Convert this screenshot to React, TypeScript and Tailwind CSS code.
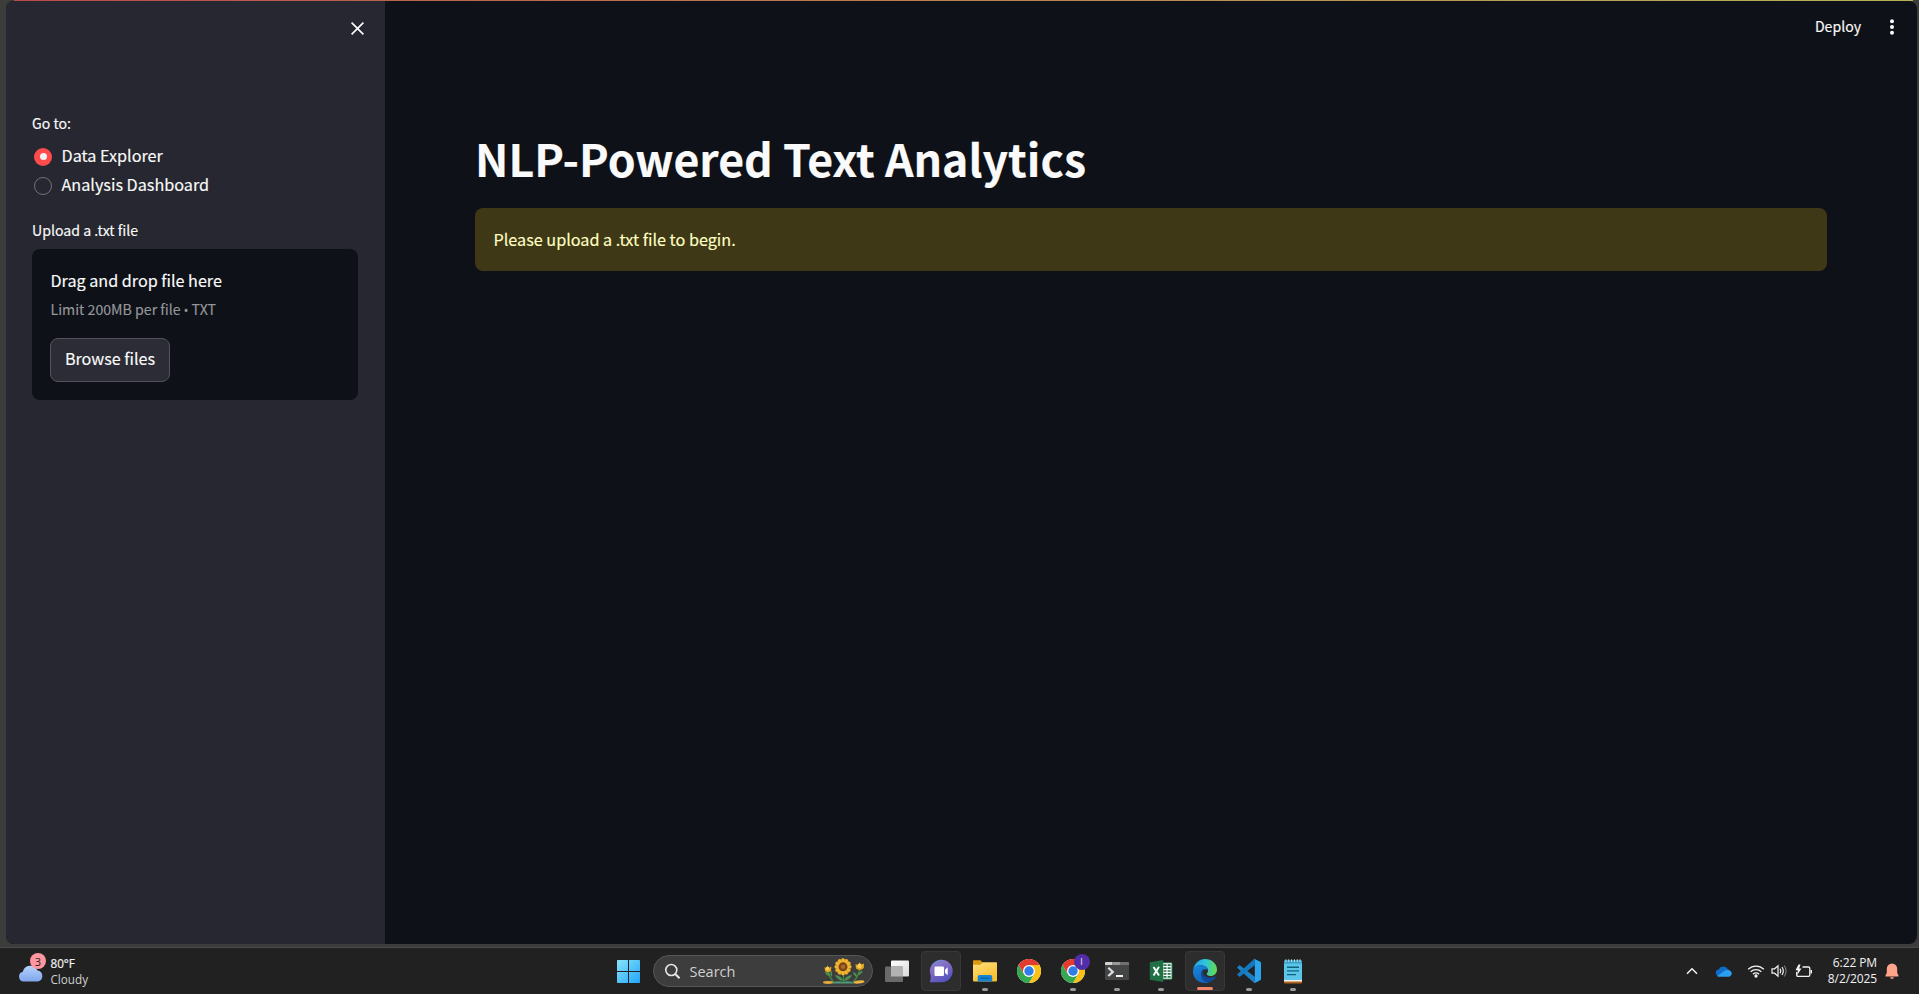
import React from "react";

const Chrome = () => (
  <svg width="24" height="24" viewBox="0 0 48 48">
    <circle cx="24" cy="24" r="24" fill="#fff" />
    <path d="M24 12 H44.8 A24 24 0 0 1 24 48 L34.4 30 Z" fill="#fbc116" />
    <path d="M13.6 30 L3.2 12 A24 24 0 0 0 24 48 L34.4 30 Z" fill="#34a853" />
    <path d="M3.2 12 L13.6 30 L24 24 L24 12 H44.8 A24 24 0 0 0 3.2 12Z" fill="#e33b2e" />
    <circle cx="24" cy="24" r="12" fill="#fff" />
    <circle cx="24" cy="24" r="9.4" fill="#2f7de9" />
  </svg>
);

const Windows = () => (
  <svg width="23" height="23" viewBox="0 0 23 23">
    <defs>
      <linearGradient id="win" x1="0" y1="0" x2="1" y2="1" gradientUnits="objectBoundingBox">
        <stop offset="0" stopColor="#8be3fb" />
        <stop offset="1" stopColor="#1fa6f7" />
      </linearGradient>
    </defs>
    <path d="M0 .7Q0 0 .7 0H11V11H0ZM12 0H22.3Q23 0 23 .7V11H12ZM0 12H11V23H.7Q0 23 0 22.3ZM12 12H23V22.3Q23 23 22.3 23H12Z" fill="url(#win)" />
  </svg>
);

const Petals = ({ cx, cy, r }: { cx: number; cy: number; r: number }) => (
  <g>
    {[15, 45, 75, 105, 135, 165, 195, 225, 255, 285, 315, 345].map((a) => (
      <ellipse key={a} cx={cx} cy={cy - r * 0.62} rx={r * 0.19} ry={r * 0.34} fill="#d08a14" transform={`rotate(${a} ${cx} ${cy})`} />
    ))}
    {[0, 30, 60, 90, 120, 150, 180, 210, 240, 270, 300, 330].map((a) => (
      <ellipse key={a} cx={cx} cy={cy - r * 0.68} rx={r * 0.18} ry={r * 0.34} fill="#f0b634" transform={`rotate(${a} ${cx} ${cy})`} />
    ))}
    <circle cx={cx} cy={cy} r={r * 0.52} fill="#7a4414" />
    <circle cx={cx} cy={cy} r={r * 0.27} fill="#a9682c" />
  </g>
);

const Sunflowers = () => (
  <svg width="42" height="26" viewBox="0 0 42 26">
    <path d="M20.500 14V25M5 13Q7 21 11 24M37 11Q35 19 30 24" stroke="#3f8a3e" strokeWidth="1.300" fill="none" />
    <path d="M20 23Q14 22 12 17Q19 18 20 23ZM21 23Q27 22 29 17Q22 18 21 23ZM7 18Q3 18 2 14Q7 14 7 18ZM35 17Q38 17 40 13Q36 13 35 17ZM9 19Q10 15 8 12Q6 16 9 19ZM34 19Q30 17 30 14Q34 15 34 19Z" fill="#4c9152" />
    <path d="M8 25.500Q13 22 20 24Q27 22 32 25.500Z" fill="#4f9a78" />
    <ellipse cx="5" cy="24.500" rx="5" ry="1.400" fill="#e7a83a" />
    <ellipse cx="36" cy="24" rx="5.500" ry="1.500" fill="#efb441" transform="rotate(-6 36 24)" />
    <path d="M1.500 9L3 10L4.500 7.500L6 9.800L8.300 8.500L8 13Q5 15.500 2 13Z" fill="#e6a520" />
    <circle cx="4.500" cy="10.500" r="1.800" fill="#f8cf55" />
    <path d="M32.500 6L34.500 7L36.500 4.500L38.500 6.500L41 5.500L40.800 10Q37 13.500 33 10.500Z" fill="#e6a520" />
    <circle cx="36.500" cy="8" r="2.200" fill="#f8cf55" />
    <Petals cx={20} cy={8.800} r={8.600} />
  </svg>
);

const TaskView = () => (
  <svg width="24" height="23" viewBox="0 0 24 23">
    <defs>
      <linearGradient id="tv" x1="0" y1="0" x2="1" y2="1">
        <stop offset="0" stopColor="#ffffff" />
        <stop offset="1" stopColor="#d9d9d9" />
      </linearGradient>
    </defs>
    <rect x="6" y="0.500" width="18" height="16" rx="1" fill="url(#tv)" />
    <rect x="0" y="6.500" width="18" height="15.500" rx="1" fill="#6a6a6a" />
    <path d="M6 6.500H18V16.500H6Z" fill="#b2b2b2" />
  </svg>
);

const Meet = () => (
  <svg width="24" height="24" viewBox="0 0 24 24">
    <defs>
      <linearGradient id="mt" x1="0.200" y1="0" x2="0.700" y2="1">
        <stop offset="0" stopColor="#6b8fd6" />
        <stop offset="0.300" stopColor="#8a6fc4" />
        <stop offset="1" stopColor="#5052bd" />
      </linearGradient>
    </defs>
    <path d="M12.500 .8A11.200 11.200 0 1 1 12.500 23.200H1.200Q.6 22.800 1.300 21.500Q1.800 20 1.600 16A11.200 11.200 0 0 1 12.500 .8Z" fill="url(#mt)" />
    <rect x="5.500" y="7.500" width="9.500" height="9.500" rx="1.200" fill="#fff" />
    <path d="M16 10.700L18.700 8.200V16.300L16 13.800Z" fill="#fff" />
  </svg>
);

const Folder = () => (
  <svg width="24" height="22" viewBox="0 0 24 22">
    <defs>
      <linearGradient id="fd" x1="0" y1="0" x2="0.500" y2="1">
        <stop offset="0" stopColor="#ffdf7d" />
        <stop offset="1" stopColor="#f9bf2d" />
      </linearGradient>
    </defs>
    <path d="M0 1Q0 .3 .8 .3H7.500L9.600 2.500V6H0Z" fill="#d99a10" />
    <path d="M0 4.800H7.300L9.800 2.200H23.200Q24 2.200 24 3V20.500Q24 21.500 23 21.500H1Q0 21.500 0 20.500Z" fill="url(#fd)" />
    <path d="M4.700 21.500V16.800Q4.700 15 6.500 15H17.400Q19.200 15 19.200 16.800V21.500Z" fill="#1583d3" />
    <path d="M7.500 18.200H16.400" stroke="#0b5aa0" strokeWidth="1.100" />
  </svg>
);

const TerminalIcon = () => (
  <svg width="24" height="18" viewBox="0 0 24 18">
    <rect width="24" height="18" rx="1" fill="#444547" />
    <path d="M0 3V1Q0 0 1 0H7.500V3Z" fill="#d0d0d0" />
    <path d="M7.500 0H15.500V3H7.500Z" fill="#999" />
    <path d="M15.500 0H23Q24 0 24 1V3H15.500Z" fill="#717171" />
    <path d="M3.300 5.800L7.800 9.900L3.300 14" stroke="#dedede" strokeWidth="2.200" fill="none" />
    <path d="M11 14H18" stroke="#fff" strokeWidth="1.900" />
  </svg>
);

const Excel = () => (
  <svg width="24" height="22" viewBox="0 0 24 22">
    <rect x="12" y="2.700" width="11" height="16.500" rx=".6" fill="#fff" stroke="#207245" strokeWidth="1" />
    <path d="M14.500 5.200H17.500M14.500 8.100H17.500M14.500 11H17.500M14.500 13.900H17.500M14.500 16.800H17.500M18.600 5.200H21.600M18.600 8.100H21.600M18.600 11H21.600M18.600 13.900H21.600M18.600 16.800H21.600" stroke="#207245" strokeWidth="1.700" />
    <path d="M.8 2.300L14.200 0V22L.8 19.800Z" fill="#1f7145" />
    <path d="M4.500 7L10 15.400M10 6.800L4.500 15.400" stroke="#fff" strokeWidth="1.900" />
  </svg>
);

const Edge = () => (
  <svg width="24" height="24" viewBox="0 0 24 24">
    <defs>
      <linearGradient id="e1" x1="0" y1="0.300" x2="1" y2="0.400">
        <stop offset="0" stopColor="#259fe4" />
        <stop offset="0.500" stopColor="#2fc3dd" />
        <stop offset="1" stopColor="#62dc4c" />
      </linearGradient>
      <linearGradient id="e2" x1="0" y1="0" x2="0.400" y2="1">
        <stop offset="0" stopColor="#1989dc" />
        <stop offset="1" stopColor="#1166bd" />
      </linearGradient>
    </defs>
    <path d="M.3 10.500C1.200 4.200 6.200 0 12 0C19 0 24 5 24 10.500C24 14.500 21 17 17.600 17C14.500 17 13.700 15.700 13.700 15C13.700 14.300 15.100 13.700 15.100 11.600C15.100 8.600 11.800 6.300 8 6.300C4.500 6.300 1.600 8 .3 10.500Z" fill="url(#e1)" />
    <path d="M0 12.200C.4 8.300 3.700 6.300 7.700 6.300C11.300 6.300 14.900 8.300 15.100 11.300C13.800 9.300 9 10 8.300 14C7.700 18.500 12 23 17.500 22.200C15.800 23.400 14 24 12 24C5 24 -.4 18.600 0 12.200Z" fill="url(#e2)" />
    <path d="M9.200 11.200C6.500 14.800 8 23 15.500 23.400C18.700 22.500 21.400 20.500 22.700 18.200C23 17.700 22.700 17.400 22.200 17.600C17 19.800 11.600 18.500 10.300 15.200C9.600 13.500 9.900 12 11 10.200Q10 10.400 9.200 11.200Z" fill="#10489a" />
  </svg>
);

const VSCode = () => (
  <svg width="24" height="24" viewBox="0 0 24 24">
    <path d="M.4 7.900L1.900 6.500Q2.500 6.100 3.100 6.500L17.800 17.800V23.600Q17 23.800 16.400 23.200L.4 8.900Q0 8.400 .4 7.900Z" fill="#1b80c4" />
    <path d="M.4 16.100L1.900 17.500Q2.500 17.900 3.100 17.500L17.800 6.200V.4Q17 .2 16.400 .8L.4 15.100Q0 15.600 .4 16.100Z" fill="#1478bd" />
    <path d="M16.300 23.300Q17 24.200 18.200 23.700L23.200 21.300Q24 20.900 24 20V4Q24 3.100 23.200 2.700L18.200 .3Q17 -.2 16.300 .7Q17.800 0 17.800 1.600V22.400Q17.800 24 16.300 23.300Z" fill="#2ba4ee" />
  </svg>
);

const Notepad = () => (
  <svg width="20" height="25" viewBox="0 0 20 25">
    <rect x="1" y="20" width="18" height="4.500" rx="1" fill="#b5651d" />
    <rect x="1" y="19" width="18" height="3.500" fill="#f2f2f2" />
    <path d="M1 2.500Q1 1.500 2 1.500H18Q19 1.500 19 2.500V21H1Z" fill="#5cc6e8" />
    <path d="M1 2.500Q1 1.500 2 1.500H18Q19 1.500 19 2.500V4.500H1Z" fill="#3a9ec4" />
    <path d="M3 .3V3M5.800 .3V3M8.600 .3V3M11.400 .3V3M14.200 .3V3M17 .3V3" stroke="#bfe9f7" strokeWidth="1" />
    <path d="M4 8.200H16M4 11.900H16M4 15.600H13" stroke="#10617f" strokeWidth="1.400" />
  </svg>
);

const Tile = ({ children, active, dot }: { children: React.ReactNode; active?: boolean; dot?: string }) => (
  <div className={"relative flex h-10 w-10 items-center justify-center rounded-[4px] " + (active ? "border border-[#383838] bg-[#2d2d2d]" : "")}>
    {children}
    {dot && <span className={"absolute bottom-0 left-1/2 h-[3px] -translate-x-1/2 rounded-full " + dot} />}
  </div>
);

const grayDot = "w-[6px] bg-[#9a9a9a]";

const Taskbar = () => (
  <footer className="flex h-[47px] shrink-0 items-center border-t border-[#4a4a4a] bg-[#212121] font-['Open_Sans',sans-serif] text-[#f2f2f2]">
    <div className="flex flex-1 items-center pl-[18px]">
      <div className="relative h-[30px] w-[32px]">
        <svg className="mt-[7px]" width="26" height="19" viewBox="0 0 26 19">
          <defs>
            <linearGradient id="cl" x1="0" y1="0" x2="0" y2="1">
              <stop offset="0" stopColor="#b5d2fb" />
              <stop offset="1" stopColor="#7fa6ec" />
            </linearGradient>
          </defs>
          <path d="M5.500 18.500A5 5 0 0 1 4.800 8.700A7.800 7.800 0 0 1 19.500 7.500A5.600 5.600 0 0 1 20 18.500Z" fill="url(#cl)" />
        </svg>
        <span className="absolute left-[12px] top-[-3px] flex h-4 w-4 items-center justify-center rounded-full bg-[#ff96a0] text-[11px] leading-none text-[#1c1c1c]">3</span>
      </div>
      <div className="pb-px pl-[0.500px] text-[11.700px] leading-4">
        <div className="[-webkit-text-stroke:0.2px]">80°F</div>
        <div className="text-[#cfcfcf]">Cloudy</div>
      </div>
    </div>
    <div className="ml-[4px] flex items-center gap-1">
      <Tile><Windows /></Tile>
      <div className="flex h-8 w-[220px] items-center rounded-full border border-[#565656] bg-[#3d3d3d] pl-[10px] pr-[7px]">
        <svg width="17" height="17" viewBox="0 0 17 17" fill="none" stroke="#e6e6e6">
          <circle cx="7.300" cy="7" r="5.500" strokeWidth="1.600" />
          <path d="M11.300 11L15.500 15.300" strokeWidth="2" />
        </svg>
        <span className="ml-[9px] flex-1 pt-px text-[14.500px] text-[#cfcfcf]">Search</span>
        <Sunflowers />
      </div>
      <Tile><TaskView /></Tile>
      <Tile active><Meet /></Tile>
      <Tile dot={grayDot}><Folder /></Tile>
      <Tile><Chrome /></Tile>
      <Tile dot={grayDot}>
        <Chrome />
        <span className="absolute right-[3px] top-[3px] flex h-4 w-4 items-center justify-center rounded-full bg-[#512da8] font-['Roboto',sans-serif] text-[9px] leading-none text-[#e6dff5]">I</span>
      </Tile>
      <Tile dot={grayDot}><TerminalIcon /></Tile>
      <Tile dot={grayDot}><Excel /></Tile>
      <Tile active dot="w-4 bg-[#f4856a]"><Edge /></Tile>
      <Tile dot={grayDot}><VSCode /></Tile>
      <Tile dot={grayDot}><Notepad /></Tile>
    </div>
    <div className="flex flex-1 items-center justify-end pr-[20px]">
      <svg width="12" height="8" viewBox="0 0 12 8" fill="none" stroke="#f2f2f2" strokeWidth="1.500">
        <path d="M1 6.800L6 1.800L11 6.800" />
      </svg>
      <svg className="ml-[17px]" width="17" height="11" viewBox="0 0 17 11">
        <path d="M3.500 10A3.300 3.300 0 0 1 3.600 3.500A5.300 5.300 0 0 1 13 3.300A3.800 3.800 0 0 1 13.500 10Z" fill="#0f6cc8" />
        <path d="M2.200 10L10 4.500Q13 3.500 15.500 5Q17.500 7 16.300 9Q15.500 10.800 13.500 10.800H3.500Q2.500 10.800 2.200 10Z" fill="#2aa0ee" />
      </svg>
      <svg className="ml-[15px]" width="18" height="14" viewBox="0 0 18 14" fill="none" stroke="#f2f2f2" strokeWidth="1.300">
        <path d="M1.200 5.300A11 11 0 0 1 16.800 5.300M3.700 7.800A7.500 7.500 0 0 1 14.300 7.800M6 10.200A4.200 4.200 0 0 1 12 10.200" />
        <circle cx="9" cy="12" r="1" fill="#f2f2f2" />
      </svg>
      <svg className="ml-[6px]" width="17" height="14" viewBox="0 0 17 14" fill="none" stroke="#f2f2f2" strokeWidth="1.200">
        <path d="M1 4.800H3.600L7 1.800V12.200L3.600 9.200H1Z" />
        <path d="M9 4.700Q10.500 7 9 9.300M11 3Q13.600 7 11 11" />
        <path d="M13.200 1.500Q17 7 13.200 12.500" stroke="#777" />
      </svg>
      <svg className="ml-[7px]" width="18" height="15" viewBox="0 0 18 15" fill="none" stroke="#f2f2f2" strokeWidth="1.300">
        <path d="M7.500 3H13.500Q14.800 3 14.800 4.300V11Q14.800 12.300 13.500 12.300H3Q1.700 12.300 1.700 11V8" />
        <path d="M15.500 6H17V9.500H15.500Z" fill="#f2f2f2" stroke="none" />
        <path d="M3.500 .5L.5 6.200H2.800L2.200 11L6.500 4.500H4.200L5.500 .5Z" fill="#f2f2f2" stroke="none" />
      </svg>
      <div className="ml-[13px] w-[51px] whitespace-nowrap text-right text-[12px] leading-4 tracking-[-0.1px]">
        <div>6:22 PM</div>
        <div>8/2/2025</div>
      </div>
      <svg className="ml-[8px]" width="14" height="17" viewBox="0 0 14 17" fill="#ffa38b">
        <path d="M7 .5A5.200 5.200 0 0 0 1.800 5.700V9.800L.4 12.800Q.2 13.500 .9 13.500H13.100Q13.800 13.500 13.600 12.800L12.200 9.800V5.700A5.200 5.200 0 0 0 7 .5ZM5 14.300H9Q8.500 16 7 16T5 14.300Z" />
      </svg>
    </div>
  </footer>
);

export default function App() {
  return (
    <div className="flex h-[994px] w-[1919px] flex-col overflow-hidden bg-[#3c3c3b] font-['Noto_Sans_CJK_SC',sans-serif] text-[#fafafa]">
      <div className="flex h-[947px] flex-col pb-[3px] pl-[6px] pr-[2px] [-webkit-text-stroke:0.15px]">
        <div className="ml-2 mr-1 h-px shrink-0 bg-linear-to-r from-[#b94a4a] to-[#b5b355]" />
        <div className="flex flex-1 overflow-hidden rounded-lg bg-[#0e1118]">
          <aside className="flex w-[379px] flex-col bg-[#262730] pl-[26px] pr-[27px]">
            <div className="mr-[-6px] flex justify-end pt-[21px]">
              <svg width="13" height="13" viewBox="0 0 13 13" stroke="#fafafa" strokeWidth="1.700">
                <path d="M.6 .6L12.400 12.400M12.400 .6L.6 12.400" />
              </svg>
            </div>
            <div className="mt-[77px] text-[14.100px] leading-[22px]">Go to:</div>
            <div className="mt-[8px] flex flex-col text-[16.200px]">
              <div className="flex h-[29px] items-center gap-[9.500px] pl-[2px]">
                <span className="flex h-[18px] w-[18px] items-center justify-center rounded-full bg-[#ff4b4b]">
                  <span className="h-[7px] w-[7px] rounded-full bg-[#f0f2f6]" />
                </span>
                <span className="pb-[2px]">Data Explorer</span>
              </div>
              <div className="flex h-[29px] items-center gap-[9.500px] pl-[2px]">
                <span className="h-[18px] w-[18px] rounded-full border border-[#71727a]" />
                <span className="pb-[2px]">Analysis Dashboard</span>
              </div>
            </div>
            <div className="mt-[19px] text-[14.150px] leading-[22px]">Upload a .txt file</div>
            <div className="mt-[8px] h-[151px] rounded-lg bg-[#0e1118] px-[18px] pt-[19px]">
              <div className="pl-[0.500px] text-[16.150px] leading-6">Drag and drop file here</div>
              <div className="mt-[6px] h-[22px] pl-[0.500px] text-[14.150px] leading-[22px] text-[#96979b]">
                Limit 200MB per file <span className="font-['Noto_Sans',sans-serif] text-[12px]">•</span> TXT
              </div>
              <button className="mt-[18px] flex h-11 w-[120px] items-center justify-center rounded-lg border border-[#53545b] bg-[#2b2c36] pb-[3px] text-[16.150px]">Browse files</button>
            </div>
          </aside>
          <main className="flex-1">
            <header className="flex h-[52px] items-center justify-end pr-[23px] text-[14.100px]">
              <span>Deploy</span>
              <svg className="ml-[29px]" width="4" height="16" viewBox="0 0 4 16" fill="#fafafa">
                <circle cx="2" cy="2.300" r="2" />
                <circle cx="2" cy="8" r="2" />
                <circle cx="2" cy="13.700" r="2" />
              </svg>
            </header>
            <div className="pl-[90px] pr-[90px] pt-[76px]">
              <h1 className="text-[44.600px] font-bold leading-[58px]">NLP-Powered Text Analytics</h1>
              <div className="mt-[21px] flex h-[63px] items-center rounded-lg bg-[#3e3816] px-[18.500px] text-[16.200px] text-[#ffffc2]">Please upload a .txt file to begin.</div>
            </div>
          </main>
        </div>
      </div>
      <Taskbar />
    </div>
  );
}
